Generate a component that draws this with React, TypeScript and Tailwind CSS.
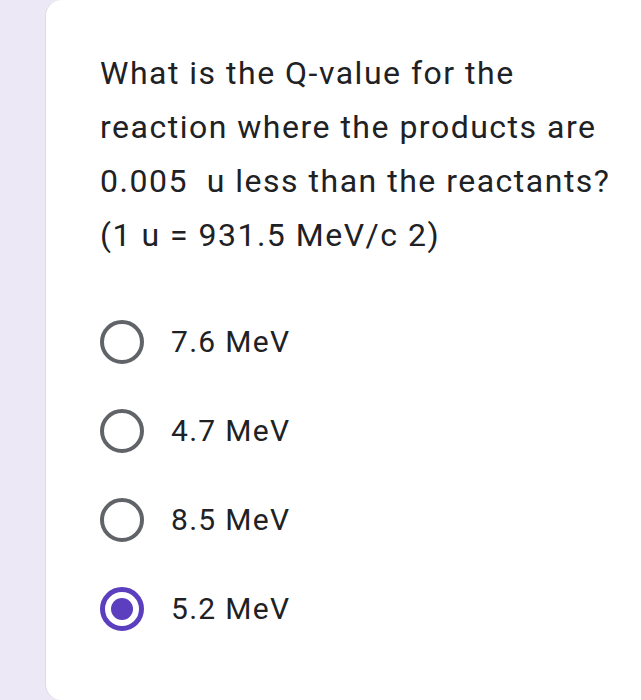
import React from "react";

const options = [
  { label: "7.6 MeV", selected: false },
  { label: "4.7 MeV", selected: false },
  { label: "8.5 MeV", selected: false },
  { label: "5.2 MeV", selected: true },
];

function Radio({ selected }: { selected: boolean }) {
  if (selected) {
    return (
      <div className="w-[44px] h-[44px] rounded-full border-[5px] border-[#5b3fbe] flex items-center justify-center shrink-0">
        <div className="w-[22px] h-[22px] rounded-full bg-[#5b3fbe]" />
      </div>
    );
  }
  return <div className="w-[44px] h-[44px] rounded-full border-[4.5px] border-[#606367] shrink-0" />;
}

export default function App() {
  return (
    <div
      className="w-[641px] h-[700px] bg-[#ece8f6] flex overflow-hidden"
      style={{ fontFamily: "Roboto, 'Noto Sans', sans-serif" }}
    >
      <div className="ml-[45px] flex-1 h-[700px] bg-white rounded-l-[16px] border-l border-[#dcdae2] pl-[54px] pt-[46px]">
        <div className="text-[32px] leading-[54px] tracking-[1.5px] text-[#202124] whitespace-pre">
          <div>What is the Q-value for the</div>
          <div>reaction where the products are</div>
          <div>0.005  u less than the reactants?</div>
          <div>(1 u = 931.5 MeV/c 2)</div>
        </div>
        <div className="mt-[58px] flex flex-col gap-[45px]">
          {options.map((o) => (
            <div key={o.label} className="h-[44px] flex items-center gap-[27px]">
              <Radio selected={o.selected} />
              <span className="text-[30px] leading-none tracking-[1.3px] text-[#202124]">{o.label}</span>
            </div>
          ))}
        </div>
      </div>
    </div>
  );
}
